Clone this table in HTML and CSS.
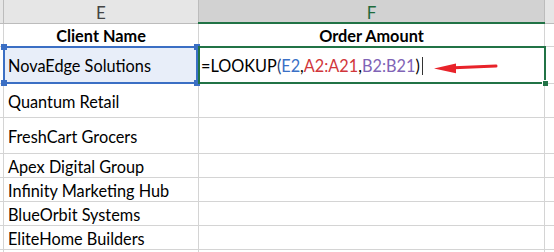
FILE: index.html
```html
<!DOCTYPE html>
<html>
<head>
<meta charset="utf-8">
<link rel="stylesheet" href="styles.css">
</head>
<body>
<div class="sheet">
  <div class="grid">
    <div class="hd corner"></div>
    <div class="hd colhead">E</div>
    <div class="hd colhead sel">F</div>
    <div class="hd rest"></div>

    <div class="c edge"></div>
    <div class="c bold center">Client Name</div>
    <div class="c bold center">Order Amount</div>
    <div class="c rest"></div>

    <div class="c edge"></div>
    <div class="c ref">NovaEdge Solutions</div>
    <div class="c formula"><span>=LOOKUP</span><span class="pb">(</span><span class="cb">E2</span>,<span class="cr">A2:A21</span>,<span class="cp">B2:B21</span>)<span class="caret"></span><svg class="arrow" width="64" height="14" viewBox="0 0 64 14"><path d="M62 6 L20 7.8" stroke="#e8232a" stroke-width="3" stroke-linecap="round" fill="none"/><path d="M0 8.4 L22 3.4 L22 13.2 Z" fill="#e8232a"/></svg></div>
    <div class="c rest"></div>

    <div class="c edge"></div>
    <div class="c">Quantum Retail</div>
    <div class="c"></div>
    <div class="c rest"></div>

    <div class="c edge"></div>
    <div class="c">FreshCart Grocers</div>
    <div class="c"></div>
    <div class="c rest"></div>

    <div class="c edge"></div>
    <div class="c">Apex Digital Group</div>
    <div class="c"></div>
    <div class="c rest"></div>

    <div class="c edge"></div>
    <div class="c">Infinity Marketing Hub</div>
    <div class="c"></div>
    <div class="c rest"></div>

    <div class="c edge"></div>
    <div class="c">BlueOrbit Systems</div>
    <div class="c"></div>
    <div class="c rest"></div>

    <div class="c edge"></div>
    <div class="c">EliteHome Builders</div>
    <div class="c"></div>
    <div class="c rest"></div>

    <div class="c edge"></div>
    <div class="c"></div>
    <div class="c"></div>
    <div class="c rest"></div>
  </div>

  <div class="blue-box">
    <i class="h tl"></i><i class="h tr"></i><i class="h bl"></i><i class="h br"></i>
  </div>
  <div class="green-box"><i class="fill-handle"></i></div>
  <div class="green-under"></div>
</div>
</body>
</html>
```
FILE: styles.css
```css
* { box-sizing: border-box; }
html, body { margin: 0; padding: 0; background: #ffffff; }
body { width: 554px; height: 252px; overflow: hidden; }

.sheet {
  position: relative;
  width: 554px;
  height: 252px;
  font-family: "Lato", "Liberation Sans", sans-serif;
  font-size: 16.3px;
  color: #000;
}

.grid {
  display: grid;
  grid-template-columns: 4px 195px 346px 9px;
  grid-template-rows: 24px 23px 37px 34px 36px 24px 24px 24px 24px 10px;
}

.hd {
  background: #e6e6e6;
  border-right: 1px solid #bcbcbc;
  border-bottom: 1px solid #bcbcbc;
  display: flex;
  align-items: center;
  justify-content: center;
  color: #444;
  font-size: 17px;
  font-weight: 400;
  padding-top: 1px;
}
.hd.sel { background: #d2d2d2; color: #1f6b3c; }
.hd.rest { border-right: none; }

.c {
  border-right: 1px solid #d4d4d4;
  border-bottom: 1px solid #d4d4d4;
  display: flex;
  align-items: center;
  padding-left: 4px;
  padding-top: 1px;
  white-space: nowrap;
  overflow: visible;
}
.c.edge { padding: 0; }
.c.rest { border-right: none; padding: 0; }
.bold { font-weight: 700; }
.center { justify-content: center; padding-left: 0; }

.ref { background: #e8eef9; }

.formula { padding-left: 2px; position: relative; }
.pb { color: #1c3f7a; }
.cb { color: #3a70c6; }
.cr { color: #d1363b; }
.cp { color: #8064b6; }
.caret {
  display: inline-block;
  width: 1px;
  height: 18px;
  background: #333;
  margin-left: 2px;
}
.arrow { margin-left: 11px; margin-top: 2px; }

.blue-box {
  position: absolute;
  left: 3px;
  top: 46px;
  width: 195px;
  height: 38px;
  border: 2px solid #3b6fc4;
}
.h {
  position: absolute;
  width: 6px;
  height: 6px;
  background: #3b6fc4;
}
.h.tl { left: -4px; top: -4px; }
.h.tr { right: -4px; top: -4px; }
.h.bl { left: -4px; bottom: -4px; }
.h.br { right: -4px; bottom: -4px; }

.green-box {
  position: absolute;
  left: 198px;
  top: 46px;
  width: 348px;
  height: 38px;
  border: 2px solid #217346;
}
.fill-handle {
  position: absolute;
  right: -4px;
  bottom: -4px;
  width: 6px;
  height: 6px;
  background: #217346;
  border-left: 1px solid #fff;
  border-top: 1px solid #fff;
}
.green-under {
  position: absolute;
  left: 198px;
  top: 22px;
  width: 347px;
  height: 2px;
  background: #217346;
}
```
